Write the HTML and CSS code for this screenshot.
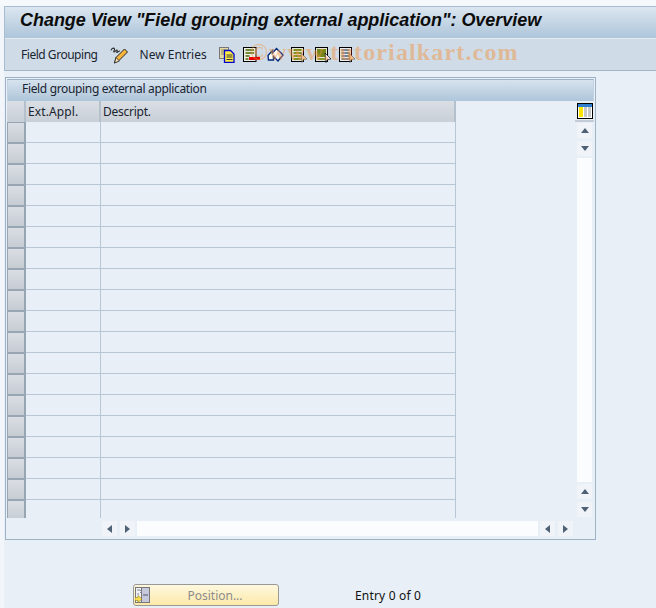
FILE: index.html
```html
<!DOCTYPE html>
<html lang="en">
<head>
<meta charset="utf-8">
<title>Change View</title>
<link rel="stylesheet" href="styles.css">
</head>
<body>
<header class="head">
  <h1 class="title">Change View "Field grouping external application": Overview</h1>
  <div class="toolbar">
    <span class="tool-label lbl-a">Field Grouping</span>
    <svg class="ico pencil" viewBox="0 0 18 18"><path d="M1 4.500c.5-2.500 3-3 3.500-1.500S3 5.500 4 6s2-2.500 3-2-1 2.500 0 2.500 2-2 3-1.500" fill="none" stroke="#2a2a2a" stroke-width="1.100"/><path d="M4.500 17l1.500-5.500 8.500-8.500 3 3-8.500 8.500z" fill="#f6b53a" stroke="#222"/><path d="M4.500 17l1.500-5.500 3.500 3.500z" fill="#f8e2b8" stroke="#222" stroke-width=".8"/></svg>
    <span class="tool-label lbl-b">New Entries</span>
    <div class="icons">
      <svg class="ico" viewBox="0 0 17 16"><rect x=".5" y=".5" width="9" height="11" fill="#e6dca0" stroke="#777"/><path d="M2 3h6M2 5h3M2 7h3" stroke="#8a8a60"/><path d="M5.500 3.500h6l3.500 3.500v8.500h-9.500z" fill="#ffee44" stroke="#0000d0" stroke-width="1.300"/><path d="M7.500 8h6M7.500 10h6M7.500 12.500h6" stroke="#333"/></svg>
      <svg class="ico" viewBox="0 0 17 16"><rect x=".5" y=".5" width="12.500" height="14" fill="#eceee8" stroke="#000"/><path d="M2.500 3h8.500M2.500 6h8.500M2.500 9h4M2.500 12h3" stroke="#76893a" stroke-width="1.800"/><rect x="6" y="10" width="11" height="3" fill="#e80000"/></svg>
      <svg class="ico" viewBox="0 0 17 16"><path d="M1 8.500l4.500-5v2.500l4-4.500 6.500 6.500-5 6-4.500-4.500v3.500H1.500z" fill="#fff" stroke="#00287a" stroke-width="1.400"/></svg>
      <svg class="ico" viewBox="0 0 17 16"><rect x=".5" y=".5" width="12" height="14" fill="#e3e7d8" stroke="#000"/><path d="M2.500 3h8M2.500 6h8M2.500 9h8M2.500 12h8" stroke="#7c8f1e" stroke-width="1.800"/><path d="M10 6l6 6-3.500.5-1.500 3z" fill="#f3c08a" stroke="#444" stroke-width=".5"/></svg>
      <svg class="ico" viewBox="0 0 17 16"><rect x=".5" y=".5" width="12" height="14" fill="#e3e7d8" stroke="#000"/><rect x="2" y="2" width="9" height="8" fill="#76881c"/><path d="M2.500 12h8" stroke="#7c8f1e" stroke-width="1.800"/><path d="M10 6l6 6-3.500.5-1.500 3z" fill="#fff" stroke="#000" stroke-width=".7"/></svg>
      <svg class="ico" viewBox="0 0 17 16"><rect x=".5" y=".5" width="12" height="14" fill="#eaedf1" stroke="#000"/><path d="M2.500 3h8M2.500 6h8M2.500 9h8M2.500 12h8" stroke="#71859a" stroke-width="1.800"/><path d="M10 6l6 6-3.500.5-1.500 3z" fill="#f3c08a" stroke="#444" stroke-width=".5"/></svg>
    </div>
    <span class="watermark">©www.tutorialkart.com</span>
  </div>
</header>

<main class="panel">
  <div class="panel-title">Field grouping external application</div>
  <div class="panel-body">
    <div class="table-clip">
      <table class="grid">
        <thead>
          <tr><th class="sel"></th><th class="c1">Ext.Appl.</th><th class="c2">Descript.</th></tr>
        </thead>
        <tbody>
          <tr><td class="sel"></td><td></td><td></td></tr>
          <tr><td class="sel"></td><td></td><td></td></tr>
          <tr><td class="sel"></td><td></td><td></td></tr>
          <tr><td class="sel"></td><td></td><td></td></tr>
          <tr><td class="sel"></td><td></td><td></td></tr>
          <tr><td class="sel"></td><td></td><td></td></tr>
          <tr><td class="sel"></td><td></td><td></td></tr>
          <tr><td class="sel"></td><td></td><td></td></tr>
          <tr><td class="sel"></td><td></td><td></td></tr>
          <tr><td class="sel"></td><td></td><td></td></tr>
          <tr><td class="sel"></td><td></td><td></td></tr>
          <tr><td class="sel"></td><td></td><td></td></tr>
          <tr><td class="sel"></td><td></td><td></td></tr>
          <tr><td class="sel"></td><td></td><td></td></tr>
          <tr><td class="sel"></td><td></td><td></td></tr>
          <tr><td class="sel"></td><td></td><td></td></tr>
          <tr><td class="sel"></td><td></td><td></td></tr>
          <tr><td class="sel"></td><td></td><td></td></tr>
          <tr><td class="sel"></td><td></td><td></td></tr>
        </tbody>
      </table>
    </div>
    <div class="vscroll">
      <div class="col-btn"><svg class="col-ico" viewBox="0 0 16 16"><rect x=".5" y=".5" width="15" height="15" fill="#fff" stroke="#000"/><rect x="1" y="1" width="14" height="3" fill="#2f7fd0"/><rect x="2" y="4" width="4" height="10" fill="#ffe600"/><rect x="7" y="4" width="3" height="10" fill="#c8c8c8"/><rect x="11" y="4" width="3" height="10" fill="#c8c8c8"/></svg></div>
      <div class="sb-btn"><span class="tri up"></span></div>
      <div class="sb-btn"><span class="tri down"></span></div>
      <div class="sb-track"></div>
      <div class="sb-btn"><span class="tri up"></span></div>
      <div class="sb-btn"><span class="tri down"></span></div>
    </div>
  </div>
  <div class="hscroll">
    <div class="sb-btn"><span class="tri left"></span></div>
    <div class="sb-btn"><span class="tri right"></span></div>
    <div class="sb-track"></div>
    <div class="sb-btn"><span class="tri left"></span></div>
    <div class="sb-btn"><span class="tri right"></span></div>
  </div>
</main>

<footer class="foot">
  <button class="pos-btn" type="button">
    <svg class="pos-ico" viewBox="0 0 15 16"><rect x=".5" y=".5" width="14" height="15" fill="#c6c8dc" stroke="#777"/><rect x=".5" y=".5" width="6" height="15" fill="#eef0f4" stroke="#777"/><path d="M8 8h5" stroke="#556"/><path d="M2 3h3l1.500 1.500L5 6M2 7h2" fill="none" stroke="#889"/><path d="M0 10.500h3V8.500l4 3.500-4 3.500v-2H0z" fill="#ffe14d" stroke="#8a7a20" stroke-width=".6"/></svg>
    <span>Position...</span>
  </button>
  <span class="entry">Entry 0 of 0</span>
</footer>
</body>
</html>
```
FILE: styles.css
```css
* { box-sizing: border-box; }
html, body { height: 100%; }
body {
  margin: 0;
  padding-top: 6px;
  overflow: hidden;
  background:
    linear-gradient(#f6f9fc, #f6f9fc) 0 0 / 100% 6px no-repeat,
    linear-gradient(#f2f6fa, #f2f6fa) 0 0 / 4px 100% no-repeat,
    #e8eff6;
  font-family: "Noto Sans", "Liberation Sans", sans-serif;
  font-size: 12px;
  color: #1a2430;
}
.head {
  margin-left: 4px;
  border-top: 1px solid #a9bdd2;
  border-left: 1px solid #a9bdd2;
  border-bottom: 1px solid #a3b6ca;
}
.title {
  margin: 0;
  height: 31px;
  padding: 1px 0 0 15px;
  background: linear-gradient(#dbe6f0, #aec5da);
  font-family: "Liberation Sans", sans-serif;
  font-size: 18px;
  font-style: italic;
  font-weight: bold;
  letter-spacing: -0.04px;
  line-height: 25px;
  color: #0c0c0c;
  white-space: nowrap;
}
.toolbar {
  position: relative;
  display: flex;
  align-items: center;
  height: 32px;
  border-top: 1px solid #e3ebf3;
  background: #cfdce8;
  padding-left: 16px;
}
.tool-label { white-space: nowrap; }
.lbl-a { letter-spacing: -0.47px; }
.ico { display: block; width: 17px; height: 16px; flex: none; }
.pencil { width: 18px; height: 18px; margin-left: 12px; }
.lbl-b { margin-left: 12px; }
.icons { display: flex; gap: 7px; margin-left: 12px; }
.watermark {
  position: absolute;
  left: 245px;
  top: 0;
  font-family: "Liberation Serif", serif;
  font-size: 24px;
  font-weight: bold;
  letter-spacing: 1.15px;
  color: rgba(240, 150, 70, 0.5);
  white-space: nowrap;
  pointer-events: none;
}
.panel {
  width: 591px;
  height: 463px;
  margin: 6px 0 0 5px;
  border: 1px solid #9db1c7;
  padding-top: 1px;
}
.panel-title {
  height: 22px;
  margin: 0 1px;
  border-top: 1px solid #9db1c7;
  border-left: 1px solid #c3d2e0;
  border-right: 1px solid #c3d2e0;
  padding-left: 14px;
  background: linear-gradient(#d7e3ee, #aec5da);
  letter-spacing: -0.34px;
  line-height: 18px;
}
.panel-body { display: flex; padding-left: 1px; }
.table-clip { width: 449px; height: 417px; overflow: hidden; flex: none; }
.grid {
  border-collapse: separate;
  border-spacing: 0;
  table-layout: fixed;
  width: 449px;
}
.grid th {
  height: 21px;
  padding: 0 0 0 2px;
  background: linear-gradient(#d9dfe5, #c9cfd6);
  border-right: 2px solid #b4c0cc;
  font-weight: normal;
  text-align: left;
  line-height: 20px;
}
.grid th.sel { width: 19px; padding: 0; }
.grid th.c1 { width: 75px; letter-spacing: 0.1px; }
.grid th.c2 { letter-spacing: -0.25px; }
.grid td {
  height: 21px;
  padding: 0;
  border-right: 1px solid #b9c6d5;
  border-bottom: 1px solid #b9c6d5;
}
.grid td.sel {
  width: 19px;
  background: linear-gradient(#dadee4, #c6ccd3);
  border: 1px solid #98a5b3;
  border-right-width: 2px;
}
.vscroll {
  width: 15px;
  margin-left: 121px;
  display: flex;
  flex-direction: column;
  align-items: center;
  height: 416px;
}
.col-btn {
  width: 19px;
  flex: none;
  height: 21px;
  margin-bottom: 1px;
  border-bottom: 2px solid #c3ccd6;
  display: flex;
  justify-content: center;
  padding-top: 2px;
}
.col-ico { display: block; width: 16px; height: 16px; flex: none; }
.sb-btn {
  width: 15px;
  height: 15px;
  flex: none;
  background: #f0f3f8;
  display: flex;
  align-items: center;
  justify-content: center;
}
.sb-track { flex: 1; background: #fbfcfd; }
.vscroll .sb-btn + .sb-btn { margin-top: 3px; }
.vscroll .sb-track { width: 15px; margin: 2px 0; }
.tri { width: 0; height: 0; border-style: solid; border-color: transparent; }
.tri.up { border-width: 0 4.500px 5px; border-bottom-color: #4f6275; }
.tri.down { border-width: 5px 4.500px 0; border-top-color: #4f6275; }
.tri.left { border-width: 4.500px 5px 4.500px 0; border-right-color: #4f6275; }
.tri.right { border-width: 4.500px 0 4.500px 5px; border-left-color: #4f6275; }
.hscroll {
  display: flex;
  height: 15px;
  margin: 3px 0 0 96px;
  width: 471px;
}
.hscroll .sb-btn + .sb-btn { margin-left: 3px; }
.hscroll .sb-track { margin: 0 2px; }
.foot {
  display: flex;
  align-items: center;
  margin: 44px 0 0 133px;
}
.pos-btn {
  position: relative;
  width: 146px;
  height: 22px;
  padding: 0 0 0 18px;
  border: 1px solid #9a9a94;
  border-radius: 3px;
  background: linear-gradient(#fdf8df, #fde9a9);
  font: inherit;
  color: #8c8c8c;
  display: flex;
  align-items: center;
  justify-content: center;
}
.pos-ico { position: absolute; left: 1px; top: 2px; width: 15px; height: 16px; }
.entry { margin-left: 76px; color: #111; letter-spacing: 0.17px; }
```
